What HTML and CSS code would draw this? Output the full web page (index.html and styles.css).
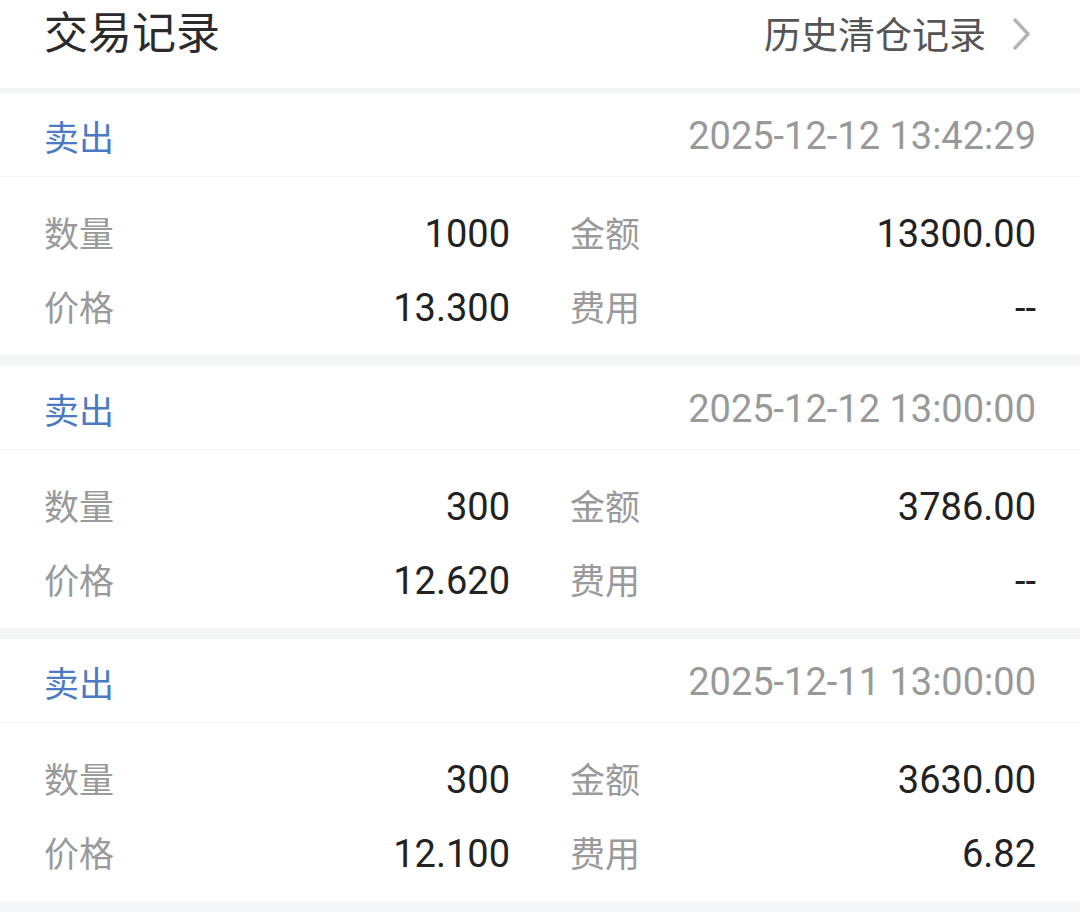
FILE: index.html
```html
<!DOCTYPE html>
<html lang="zh-CN">
<head>
<meta charset="utf-8">
<title>交易记录</title>
<link rel="stylesheet" href="styles.css">
</head>
<body>
<div class="page">
  <header class="top">
    <h1 class="title">交易记录</h1>
    <a class="history">
      <span>历史清仓记录</span>
      <svg class="chev" width="20" height="34" viewBox="0 0 20 34"><polyline points="3,3 16,17 3,31" fill="none" stroke="#b3b3b3" stroke-width="3.4" stroke-linecap="round" stroke-linejoin="round"/></svg>
    </a>
  </header>
  <div class="band band-top"></div>

  <section class="card">
    <div class="card-head">
      <span class="type">卖出</span>
      <span class="time">2025-12-12 13:42:29</span>
    </div>
    <div class="card-body">
      <div class="cell"><span class="label">数量</span><span class="value">1000</span></div>
      <div class="cell"><span class="label">金额</span><span class="value">13300.00</span></div>
      <div class="cell"><span class="label">价格</span><span class="value">13.300</span></div>
      <div class="cell"><span class="label">费用</span><span class="value">--</span></div>
    </div>
  </section>
  <div class="band"></div>

  <section class="card">
    <div class="card-head">
      <span class="type">卖出</span>
      <span class="time">2025-12-12 13:00:00</span>
    </div>
    <div class="card-body">
      <div class="cell"><span class="label">数量</span><span class="value">300</span></div>
      <div class="cell"><span class="label">金额</span><span class="value">3786.00</span></div>
      <div class="cell"><span class="label">价格</span><span class="value">12.620</span></div>
      <div class="cell"><span class="label">费用</span><span class="value">--</span></div>
    </div>
  </section>
  <div class="band"></div>

  <section class="card">
    <div class="card-head">
      <span class="type">卖出</span>
      <span class="time">2025-12-11 13:00:00</span>
    </div>
    <div class="card-body">
      <div class="cell"><span class="label">数量</span><span class="value">300</span></div>
      <div class="cell"><span class="label">金额</span><span class="value">3630.00</span></div>
      <div class="cell"><span class="label">价格</span><span class="value">12.100</span></div>
      <div class="cell"><span class="label">费用</span><span class="value">6.82</span></div>
    </div>
  </section>
  <div class="band"></div>
</div>
</body>
</html>
```

FILE: styles.css
```css
* { box-sizing: border-box; }
html, body {
  margin: 0;
  padding: 0;
  background: #ffffff;
}
body {
  font-family: "Noto Sans CJK SC", "Noto Sans", sans-serif;
  color: #222222;
  overflow: hidden;
}
.page {
  width: 1080px;
}
.top {
  height: 88px;
  display: flex;
  justify-content: space-between;
  align-items: flex-start;
  padding: 0 44px;
}
.title {
  margin: 0;
  padding-top: 2px;
  font-size: 44px;
  line-height: 56px;
  font-weight: 400;
  color: #2b2b2b;
}
.history {
  display: flex;
  align-items: center;
  gap: 26px;
  padding-top: 6px;
  font-size: 37px;
  line-height: 54px;
  color: #555555;
}
.chev {
  display: block;
  margin-right: 4px;
  margin-top: 2px;
}
.band {
  height: 11px;
  background: #f5f6f8;
}
.band-top {
  height: 5px;
}
.card-head {
  height: 84px;
  display: flex;
  justify-content: space-between;
  align-items: center;
  padding: 2px 44px 0;
  border-bottom: 1px solid #f2f3f5;
}
.type {
  font-size: 35px;
  color: #4a7bc4;
}
.time {
  font-family: Roboto, "Noto Sans", sans-serif;
  font-size: 38px;
  color: #999999;
}
.card-body {
  height: 178px;
  padding: 20px 44px 10px;
  display: grid;
  grid-template-columns: 1fr 1fr;
  column-gap: 60px;
  grid-auto-rows: 74px;
}
.cell {
  display: flex;
  justify-content: space-between;
  align-items: center;
}
.label {
  font-size: 35px;
  color: #9a9a9a;
  margin-top: -5px;
}
.value {
  font-family: Roboto, "Noto Sans", sans-serif;
  font-size: 38px;
  color: #222222;
}
```
